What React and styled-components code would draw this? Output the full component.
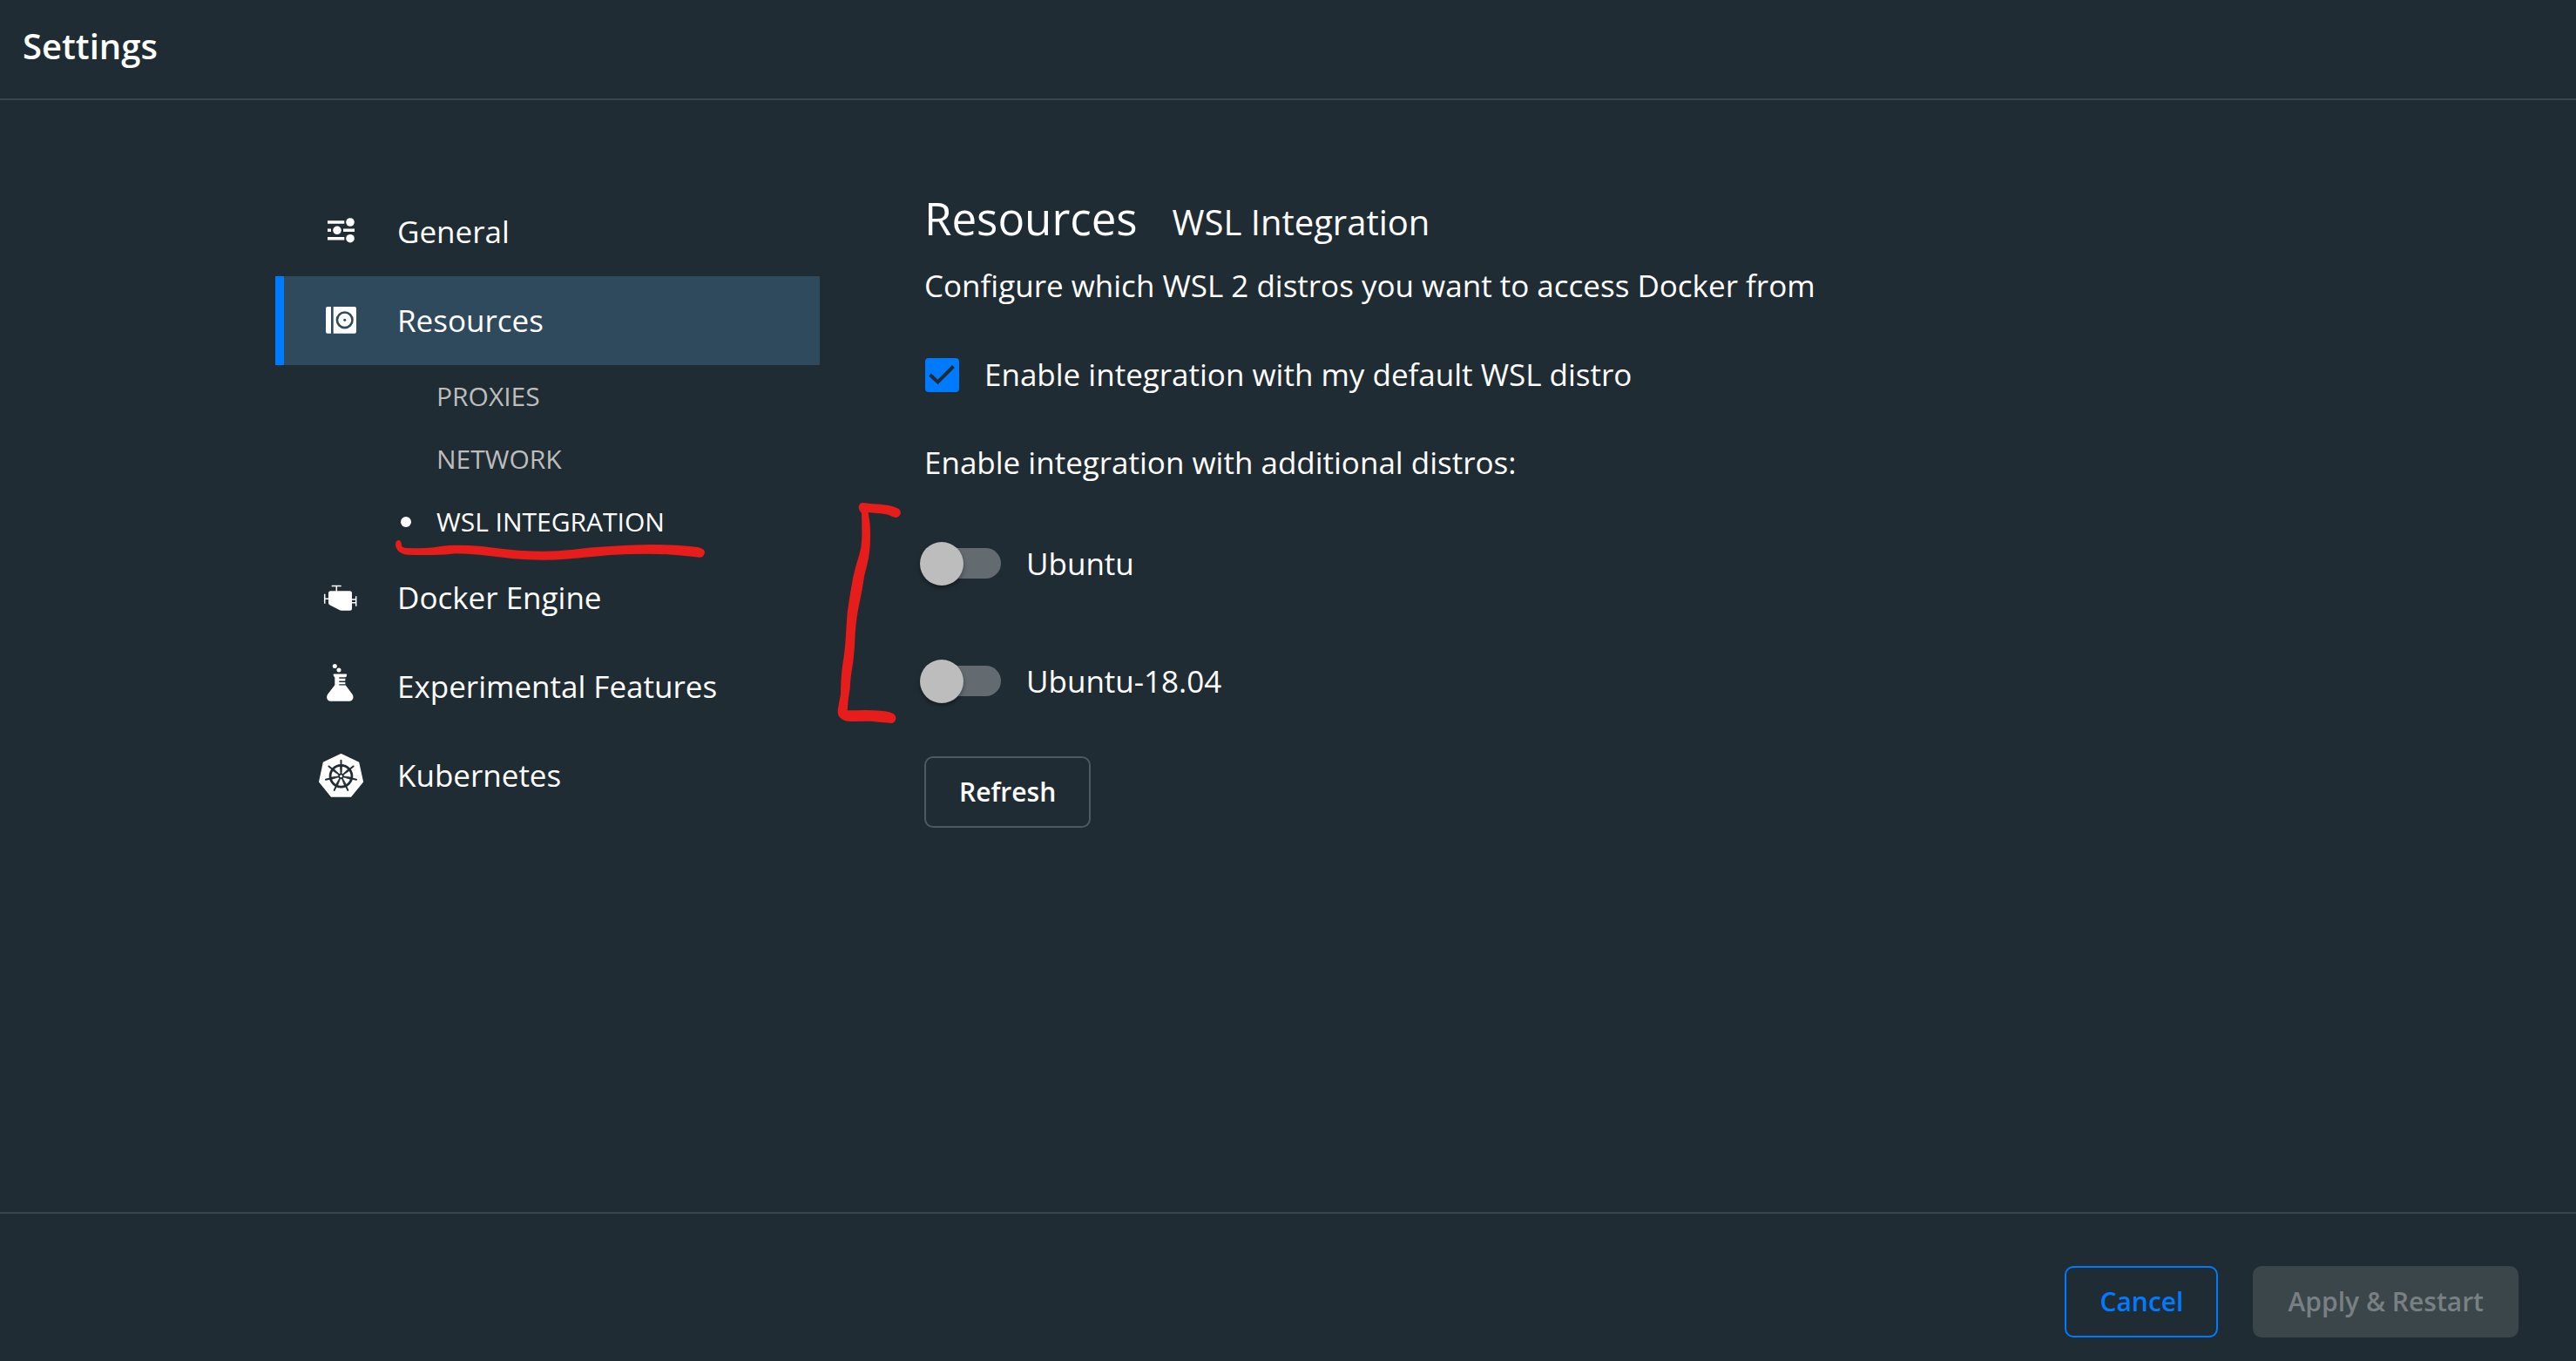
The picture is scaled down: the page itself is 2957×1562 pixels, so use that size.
import React, { useState } from "react";
import styled, { createGlobalStyle, css } from "styled-components";

const color = {
  page: "#202c33",
  line: "#3a454c",
  active: "#2f4a5c",
  blue: "#007bff",
  text: "#ffffff",
  muted: "#bdbdbd",
  marker: "#e71d1b",
};

const GlobalStyle = createGlobalStyle`
  *, *::before, *::after { box-sizing: border-box; }
  body {
    margin: 0;
    background: ${color.page};
    color: ${color.text};
    font-family: "Open Sans", "Noto Sans", sans-serif;
    font-size: 35px;
    line-height: 50px;
  }
`;

const Page = styled.div`
  display: flex;
  flex-direction: column;
  min-height: 100vh;
`;

const Header = styled.header`
  padding: 23px 26px 30px;
  border-bottom: 2px solid ${color.line};
`;

const Title = styled.h1`
  margin: 0;
  font-size: 40px;
  font-weight: 600;
  line-height: 60px;
`;

const Main = styled.main`
  flex: 1;
  display: flex;
  gap: 120px;
  padding: 100px 316px;
`;

const Nav = styled.nav`
  flex: 0 0 625px;
`;

const NavList = styled.ul`
  margin: 0;
  padding: 0;
  list-style: none;
`;

const NavLink = styled.a`
  display: flex;
  align-items: center;
  gap: 38px;
  height: 102px;
  padding-left: 40px;
  border-left: 10px solid ${(p) => (p.$active ? color.blue : "transparent")};
  background: ${(p) => (p.$active ? color.active : "transparent")};
  color: inherit;
  text-decoration: none;
`;

const NavIcon = styled.svg`
  flex: none;
  width: 52px;
  height: 52px;
  fill: #fff;
`;

const SubItem = styled.li`
  position: relative;
`;

const SubLink = styled.a`
  display: flex;
  align-items: center;
  gap: 29px;
  height: 72px;
  padding-left: 144px;
  color: ${(p) => (p.$active ? color.text : color.muted)};
  font-size: 30px;
  text-decoration: none;
  text-transform: uppercase;

  &::before {
    content: "";
    width: 12px;
    height: 12px;
    border-radius: 50%;
    background: ${(p) => (p.$active ? color.text : "transparent")};
  }
`;

const Marker = styled.svg`
  position: absolute;
  overflow: visible;
  fill: ${color.marker};
  pointer-events: none;
`;

const Underline = styled(Marker)`
  left: 136px;
  top: 55px;
  width: 360px;
  height: 26px;
`;

const Bracket = styled(Marker)`
  left: -100px;
  top: -4px;
  width: 80px;
  height: 260px;
`;

const Content = styled.section`
  flex: 1;
  min-width: 0;
`;

const Heading = styled.h2`
  display: flex;
  align-items: baseline;
  gap: 40px;
  margin: 0 0 18px;
  font-size: 51px;
  font-weight: 400;
  line-height: 70px;
`;

const SubHeading = styled.span`
  font-size: 40px;
  line-height: 60px;
`;

const Text = styled.p`
  margin: 0;
`;

const CheckLabel = styled.label`
  display: flex;
  align-items: center;
  gap: 29px;
  margin: 52px 0 51px;
`;

const CheckHolder = styled.span`
  display: grid;
  place-items: center;
  padding-left: 1px;

  > * {
    grid-area: 1 / 1;
  }
`;

const CheckInput = styled.input`
  appearance: none;
  width: 39px;
  height: 39px;
  margin: 0;
  border: 2px solid ${color.blue};
  border-radius: 4px;

  &:checked {
    background: ${color.blue};
  }
`;

const CheckMark = styled.svg`
  width: 39px;
  height: 39px;
  fill: none;
  stroke: ${color.page};
  stroke-width: 4;
  pointer-events: none;
`;

const Distros = styled.div`
  position: relative;
  margin: 23px 0 19px;
`;

const ToggleLabel = styled.label`
  display: flex;
  align-items: center;
  gap: 29px;
  height: 135px;
`;

const ToggleInput = styled.input`
  appearance: none;
  display: flex;
  align-items: center;
  width: 85px;
  height: 35px;
  margin: 0 0 0 3px;
  border-radius: 18px;
  background: #636b70;

  &::before {
    content: "";
    flex: none;
    width: 50px;
    height: 50px;
    margin-left: -8px;
    border-radius: 50%;
    background: ${color.muted};
    box-shadow: 0 3px 5px rgba(0, 0, 0, 0.35);
  }

  &:checked {
    background: ${color.blue};
    justify-content: flex-end;
  }
`;

const variants = {
  plain: css`
    border-color: #50595f;
    color: ${color.text};
  `,
  outline: css`
    border-color: ${color.blue};
    color: ${color.blue};
  `,
  disabled: css`
    border-color: #3b464b;
    background: #3b464b;
    color: #788083;
  `,
};

const Button = styled.button`
  height: 82px;
  padding: 0 38px;
  border: 2px solid;
  border-radius: 10px;
  background: transparent;
  font: 600 30px/40px "Open Sans", "Noto Sans", sans-serif;
  ${(p) => variants[p.$variant]}
`;

const Footer = styled.footer`
  display: flex;
  justify-content: flex-end;
  gap: 40px;
  padding: 60px 66px 27px;
  border-top: 2px solid ${color.line};
`;

const GeneralIcon = () => (
  <NavIcon viewBox="0 0 52 52" aria-hidden="true">
    <path d="M10 13.2h19.3v3.6H10zM10 22.5h4v3.6h-4zM28 22.5h13v3.6H28zM10 31.9h19.3v3.6H10z" />
    <circle cx="36" cy="15" r="4.8" />
    <circle cx="21" cy="24.3" r="4.8" />
    <circle cx="36" cy="33.7" r="4.8" />
  </NavIcon>
);

const ResourcesIcon = () => (
  <NavIcon viewBox="0 0 52 52" aria-hidden="true">
    <path d="M10 10h4v30.7h-4a2 2 0 0 1-2-2V12a2 2 0 0 1 2-2zM16.7 10H41a2 2 0 0 1 2 2v26.7a2 2 0 0 1-2 2H16.7z" />
    <circle cx="29.7" cy="25.3" r="8.8" fill="none" stroke={color.active} strokeWidth="2.6" />
    <circle cx="29.7" cy="25.3" r="1.5" fill={color.active} />
  </NavIcon>
);

const EngineIcon = () => (
  <NavIcon viewBox="0 0 52 52" aria-hidden="true">
    <path d="M13.5 18.3h22a2.5 2.5 0 0 1 2.5 2.5v17.4a2.5 2.5 0 0 1-2.5 2.5H26a5 5 0 0 1-2.5-.7L12.3 34.3a2.5 2.5 0 0 1-1.3-2.2V20.8a2.5 2.5 0 0 1 2.5-2.5z" />
    <path
      d="M14.7 12.5h11M20.3 12.5v7M6.7 21.7v11M6.7 27.2h5M42.7 24.3v11.4M37 28h5.7M37 31.7h5.7"
      fill="none"
      stroke="#fff"
      strokeWidth="1.5"
    />
  </NavIcon>
);

const FlaskIcon = () => (
  <NavIcon viewBox="0 0 52 52" aria-hidden="true">
    <circle cx="18.3" cy="2.5" r="2.5" />
    <circle cx="23" cy="7" r="2.5" />
    <path d="M17.5 11.5h13.6a1 1 0 0 1 1 1.2l-.5 1.8a1 1 0 0 1-1 .8h-7.3v1.4h7.1v2.8h-7.1v1.5h7.1v2.3h-7.1v1.3h7.5l7.6 10.2c2.3 3.5.7 7.9-3.3 7.9H13.5c-4 0-5.6-4.4-3.3-7.9l8.1-10.5V15.3a1 1 0 0 1-.8-.8l-.9-1.8a1 1 0 0 1 .9-1.2z" />
  </NavIcon>
);

const spokes = [0, 1, 2, 3, 4, 5, 6].map((n) => (n * 360) / 7);

const KubernetesIcon = () => (
  <NavIcon viewBox="0 0 52 52" aria-hidden="true">
    <path
      d="M25.5 1.7L45.5 11.2L50.3 33.2L36.6 50H14.4L.8 33.2L5.5 11.2z"
      stroke="#fff"
      strokeWidth="1.5"
      strokeLinejoin="round"
    />
    <g stroke={color.page} fill={color.page}>
      <circle cx="25.5" cy="26.7" r="12.4" fill="none" strokeWidth="2.8" />
      {spokes.map((angle) => (
        <g key={angle} transform={`rotate(${angle} 25.5 26.7)`}>
          <path d="M25.5 14V8.7" strokeWidth="2" strokeLinecap="round" />
          <path d="M24.3 15L25 24H26L26.7 15z" strokeWidth=".6" />
        </g>
      ))}
      <circle cx="25.5" cy="26.7" r="3.2" stroke="none" />
      <circle cx="25.5" cy="26.7" r="1.5" fill="#fff" stroke="none" />
    </g>
  </NavIcon>
);

const navItems = [
  { label: "General", Icon: GeneralIcon },
  {
    label: "Resources",
    Icon: ResourcesIcon,
    active: true,
    children: [
      { label: "Proxies" },
      { label: "Network" },
      { label: "WSL Integration", active: true },
    ],
  },
  { label: "Docker Engine", Icon: EngineIcon },
  { label: "Experimental Features", Icon: FlaskIcon },
  { label: "Kubernetes", Icon: KubernetesIcon },
];

const UnderlineStroke = () => (
  <Underline viewBox="452 618 360 26" aria-hidden="true">
    <path d="M454 625Q454 620 458 620Q461 621 461 626.7Q463 629 468 629Q485 629.5 498 628.3Q512 625.7 523 625.7Q536 625.5 553 627Q575 630 595 631.7Q610 632.7 624 632.7Q640 632.5 658 630.7Q678 628.3 696 627.3Q722 625.5 746 625Q764 625 776 625.7Q790 626.5 801 628Q809 629.5 809 634Q808 640 803 639.7Q795 638.5 784 637.7Q765 635.7 746 635.7Q722 635.7 700 637Q674 639.5 649 641.7Q637 642.7 624 642.7Q607 642.5 590 641.3Q571 639 553 637Q537 635.3 523 635.3Q510 637 498 637Q482 637.3 468 636.7Q461 636 456.6 631.7Q454 628.5 454 625z" />
  </Underline>
);

const BracketStroke = () => (
  <Bracket viewBox="63 45 240 780" aria-hidden="true">
    <path d="M137 68Q137 51 153 51Q170 54 185 55Q215 56 240 60Q262 64 275 72Q284 80 281 90Q275 103 263 102Q250 97 238 92Q220 88 200 87Q185 86 170 84Q177 120 177 150Q178 200 172 235Q168 260 157 300Q150 350 138 405Q130 440 125 500Q124 550 118 600Q108 655 107 690Q100 730 98 766Q130 766 160 765Q190 765 220 768Q240 770 255 776Q266 783 265 795Q262 810 248 810Q215 807 180 803Q145 803 110 804Q86 804 75 793Q64 785 65 765Q69 740 75 710Q75 670 80 620Q90 560 92 520Q95 470 98 430Q104 385 112 340Q117 305 127 270Q141 225 145 205Q149 170 148 150Q148 110 147 86Q138 78 137 68z" />
  </Bracket>
);

function Toggle({ label }) {
  const [on, setOn] = useState(false);
  return (
    <ToggleLabel>
      <ToggleInput type="checkbox" role="switch" checked={on} onChange={() => setOn(!on)} />
      {label}
    </ToggleLabel>
  );
}

function NavEntry({ label, Icon, active, children }) {
  return (
    <li>
      <NavLink href="#" $active={active}>
        <Icon />
        {label}
      </NavLink>
      {children && (
        <NavList>
          {children.map((child) => (
            <SubItem key={child.label}>
              <SubLink href="#" $active={child.active}>
                {child.label}
              </SubLink>
              {child.active && <UnderlineStroke />}
            </SubItem>
          ))}
        </NavList>
      )}
    </li>
  );
}

export default function App() {
  const [useDefault, setUseDefault] = useState(true);

  return (
    <Page>
      <GlobalStyle />
      <Header>
        <Title>Settings</Title>
      </Header>
      <Main>
        <Nav aria-label="Settings sections">
          <NavList>
            {navItems.map((item) => (
              <NavEntry key={item.label} {...item} />
            ))}
          </NavList>
        </Nav>
        <Content>
          <Heading>
            Resources
            <SubHeading>WSL Integration</SubHeading>
          </Heading>
          <Text>Configure which WSL 2 distros you want to access Docker from</Text>
          <CheckLabel>
            <CheckHolder>
              <CheckInput
                type="checkbox"
                checked={useDefault}
                onChange={() => setUseDefault(!useDefault)}
              />
              {useDefault && (
                <CheckMark viewBox="0 0 39 39" aria-hidden="true">
                  <path d="M5.5 19L14.5 27.5L32.5 9.5" />
                </CheckMark>
              )}
            </CheckHolder>
            Enable integration with my default WSL distro
          </CheckLabel>
          <Text>Enable integration with additional distros:</Text>
          <Distros>
            <Toggle label="Ubuntu" />
            <Toggle label="Ubuntu-18.04" />
            <BracketStroke />
          </Distros>
          <Button type="button" $variant="plain">
            Refresh
          </Button>
        </Content>
      </Main>
      <Footer>
        <Button type="button" $variant="outline">
          Cancel
        </Button>
        <Button type="button" $variant="disabled" disabled>
          Apply &amp; Restart
        </Button>
      </Footer>
    </Page>
  );
}
